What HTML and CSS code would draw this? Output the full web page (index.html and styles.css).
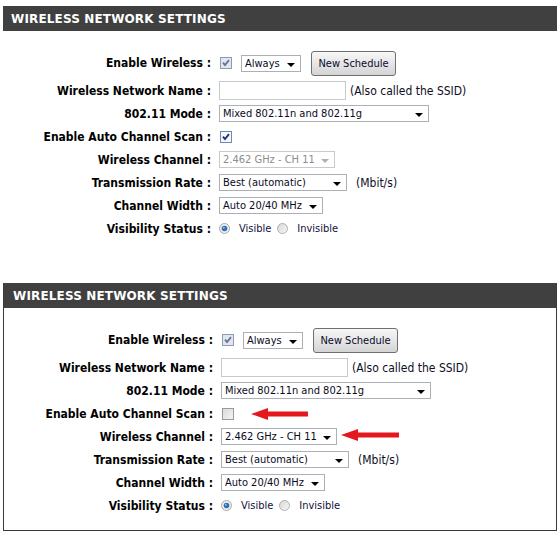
FILE: index.html
```html
<!DOCTYPE html>
<html>
<head>
<meta charset="utf-8">
<link rel="stylesheet" href="styles.css">
</head>
<body>
<div class="panel p1">
  <div class="hdr">WIRELESS NETWORK SETTINGS</div>
  <div class="form">
    <div class="row tall">
      <span class="lbl">Enable Wireless :</span>
      <div class="ctl">
        <svg class="cb" width="12" height="12" viewBox="0 0 12 12"><rect x=".5" y=".5" width="11" height="11" fill="#e4e6ea" stroke="#8a9cb6"/><path d="M3 5.6 L5 8 L9 3.2" stroke="#5d74a4" stroke-width="1.8" fill="none"/></svg>
        <div class="sel w-always">Always</div>
        <div class="btn">New Schedule</div>
      </div>
    </div>
    <div class="row">
      <span class="lbl">Wireless Network Name :</span>
      <div class="ctl"><div class="inp"></div><span class="note">(Also called the SSID)</span></div>
    </div>
    <div class="row">
      <span class="lbl">802.11 Mode :</span>
      <div class="ctl"><div class="sel w-mode">Mixed 802.11n and 802.11g</div></div>
    </div>
    <div class="row">
      <span class="lbl">Enable Auto Channel Scan :</span>
      <div class="ctl">
        <svg class="cb" width="12" height="12" viewBox="0 0 12 12"><rect x=".5" y=".5" width="11" height="11" fill="#f7f7f7" stroke="#6f88ad"/><path d="M3 5.6 L5 8 L9 3.2" stroke="#1d2f86" stroke-width="1.9" fill="none"/></svg>
      </div>
    </div>
    <div class="row">
      <span class="lbl">Wireless Channel :</span>
      <div class="ctl"><div class="sel dis w-chan">2.462 GHz - CH 11</div></div>
    </div>
    <div class="row">
      <span class="lbl">Transmission Rate :</span>
      <div class="ctl"><div class="sel w-rate">Best (automatic)</div><span class="note mbit">(Mbit/s)</span></div>
    </div>
    <div class="row">
      <span class="lbl">Channel Width :</span>
      <div class="ctl"><div class="sel w-width">Auto 20/40 MHz</div></div>
    </div>
    <div class="row">
      <span class="lbl">Visibility Status :</span>
      <div class="ctl">
        <svg class="rad" width="11" height="11" viewBox="0 0 11 11"><circle cx="5.5" cy="5.5" r="5" fill="#eeeeee" stroke="#a9a9a9"/><circle cx="5.5" cy="5.5" r="2.8" fill="#2e6fb5"/><circle cx="4.8" cy="4.7" r="1" fill="#8fc0ec"/></svg>
        <span class="opt">Visible</span>
        <svg class="rad rad2" width="11" height="11" viewBox="0 0 11 11"><defs><linearGradient id="rg1" x1="0" y1="0" x2="1" y2="1"><stop offset="0" stop-color="#d6d6d6"/><stop offset="1" stop-color="#f8f8f8"/></linearGradient></defs><circle cx="5.5" cy="5.5" r="5" fill="url(#rg1)" stroke="#b0b0b0"/></svg>
        <span class="opt">Invisible</span>
      </div>
    </div>
  </div>
</div>

<div class="panel p2">
  <div class="hdr">WIRELESS NETWORK SETTINGS</div>
  <div class="form">
    <div class="row tall">
      <span class="lbl">Enable Wireless :</span>
      <div class="ctl">
        <svg class="cb" width="12" height="12" viewBox="0 0 12 12"><rect x=".5" y=".5" width="11" height="11" fill="#e4e6ea" stroke="#8a9cb6"/><path d="M3 5.6 L5 8 L9 3.2" stroke="#5d74a4" stroke-width="1.8" fill="none"/></svg>
        <div class="sel w-always">Always</div>
        <div class="btn">New Schedule</div>
      </div>
    </div>
    <div class="row">
      <span class="lbl">Wireless Network Name :</span>
      <div class="ctl"><div class="inp"></div><span class="note">(Also called the SSID)</span></div>
    </div>
    <div class="row">
      <span class="lbl">802.11 Mode :</span>
      <div class="ctl"><div class="sel w-mode">Mixed 802.11n and 802.11g</div></div>
    </div>
    <div class="row">
      <span class="lbl">Enable Auto Channel Scan :</span>
      <div class="ctl">
        <svg class="cb" width="12" height="12" viewBox="0 0 12 12"><defs><linearGradient id="cg1" x1="0" y1="0" x2="1" y2="1"><stop offset="0" stop-color="#d9d9d9"/><stop offset="1" stop-color="#f6f6f6"/></linearGradient></defs><rect x=".5" y=".5" width="11" height="11" fill="url(#cg1)" stroke="#9a9a9a"/></svg>
        <svg class="arrow a1" width="57" height="12" viewBox="0 0 57 12"><polygon points="0,6 17,0 17,3.6 57,3.6 57,8.4 17,8.4 17,12" fill="#e3171d"/></svg>
      </div>
    </div>
    <div class="row">
      <span class="lbl">Wireless Channel :</span>
      <div class="ctl">
        <div class="sel w-chan">2.462 GHz - CH 11</div>
        <svg class="arrow a2" width="58" height="12" viewBox="0 0 58 12"><polygon points="0,6 17,0 17,3.6 58,3.6 58,8.4 17,8.4 17,12" fill="#e3171d"/></svg>
      </div>
    </div>
    <div class="row">
      <span class="lbl">Transmission Rate :</span>
      <div class="ctl"><div class="sel w-rate">Best (automatic)</div><span class="note mbit">(Mbit/s)</span></div>
    </div>
    <div class="row">
      <span class="lbl">Channel Width :</span>
      <div class="ctl"><div class="sel w-width">Auto 20/40 MHz</div></div>
    </div>
    <div class="row">
      <span class="lbl">Visibility Status :</span>
      <div class="ctl">
        <svg class="rad" width="11" height="11" viewBox="0 0 11 11"><circle cx="5.5" cy="5.5" r="5" fill="#eeeeee" stroke="#a9a9a9"/><circle cx="5.5" cy="5.5" r="2.8" fill="#2e6fb5"/><circle cx="4.8" cy="4.7" r="1" fill="#8fc0ec"/></svg>
        <span class="opt">Visible</span>
        <svg class="rad rad2" width="11" height="11" viewBox="0 0 11 11"><defs><linearGradient id="rg2" x1="0" y1="0" x2="1" y2="1"><stop offset="0" stop-color="#d6d6d6"/><stop offset="1" stop-color="#f8f8f8"/></linearGradient></defs><circle cx="5.5" cy="5.5" r="5" fill="url(#rg2)" stroke="#b0b0b0"/></svg>
        <span class="opt">Invisible</span>
      </div>
    </div>
  </div>
</div>
</body>
</html>
```
FILE: styles.css
```css
* { box-sizing: border-box; }

body {
  margin: 0;
  padding: 6px 3px 0;
  background: #fff;
  color: #000;
  font-family: "DejaVu Sans Condensed", "DejaVu Sans", sans-serif;
  font-stretch: condensed;
}

.panel { width: 554px; }

.p2 {
  margin-top: 43px;
  border: 1px solid #3a3a3a;
  border-top: none;
}

.hdr {
  height: 25px;
  line-height: 26px;
  background: #404040;
  color: #fff;
  font-family: "DejaVu Sans", sans-serif;
  font-stretch: normal;
  font-weight: bold;
  font-size: 12px;
  letter-spacing: 0.15px;
  padding-left: 8px;
}

.p2 .hdr { padding-left: 9px; }

.form { padding-top: 16px; }
.p2 .form { padding: 16px 0 13px 1px; }

.row {
  display: flex;
  align-items: center;
  height: 23px;
}
.row.tall { height: 32px; }

.lbl {
  flex: none;
  width: 208px;
  text-align: right;
  font-weight: bold;
  font-size: 12px;
  white-space: nowrap;
}

.ctl {
  margin-left: 8px;
  display: flex;
  align-items: center;
  font-size: 11px;
}

.cb { flex: none; margin-left: 1px; display: block; }
.rad { flex: none; display: block; }
.rad2 { margin-left: 6px; }

.sel {
  position: relative;
  flex: none;
  height: 17px;
  border: 1px solid #aab0b6;
  background: #fff;
  font-size: 11px;
  line-height: 15px;
  padding-left: 3px;
  white-space: nowrap;
  color: #0a0a1e;
}
.sel::after {
  content: "";
  position: absolute;
  right: 5px;
  top: 7px;
  border-left: 4px solid transparent;
  border-right: 4px solid transparent;
  border-top: 4px solid #000;
}
.sel.dis { color: #8c8c8c; border-color: #c8cbce; }
.sel.dis::after { border-top-color: #b0b0b0; }

.cb + .sel { margin-left: 9px; }

.w-always { width: 60px; }
.w-mode { width: 210px; }
.w-chan { width: 116px; }
.w-rate { width: 128px; }
.w-width { width: 104px; }

.inp {
  flex: none;
  width: 127px;
  height: 19px;
  border: 1px solid #c6cacd;
  background: #fff;
}

.btn {
  flex: none;
  width: 85px;
  height: 25px;
  margin-left: 10px;
  border: 1px solid #6f6f6f;
  border-radius: 3px;
  background: linear-gradient(#f7f7f7, #e2e2e2 60%, #d4d4d4);
  display: flex;
  align-items: center;
  justify-content: center;
  font-size: 11px;
  color: #0a0a2a;
}

.note {
  margin-left: 4px;
  font-size: 12px;
  color: #0d0d24;
  white-space: nowrap;
}
.note.mbit { margin-left: 9px; }

.opt {
  margin-left: 9px;
  font-size: 11px;
  color: #10103a;
}

.arrow { flex: none; display: block; }
.a1 { margin-left: 17px; }
.a2 { margin-left: 4px; margin-top: -3px; }
```
